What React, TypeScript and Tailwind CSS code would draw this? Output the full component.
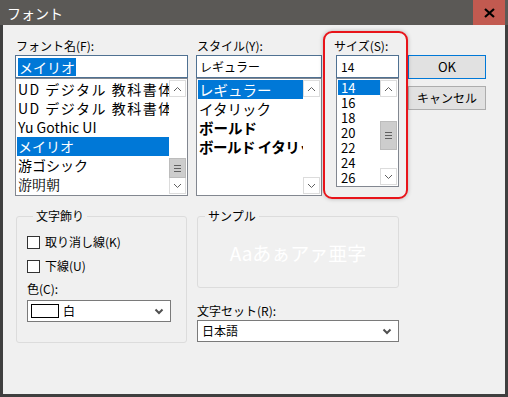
import React from "react";

const jp = "font-['Noto_Sans_CJK_JP','Noto_Sans',sans-serif]";

function Chevron({ up = false }: { up?: boolean }) {
  return (
    <svg width="9" height="6" viewBox="0 0 9 6">
      <polyline
        points={up ? "1,5 4.5,1.5 8,5" : "1,1 4.5,4.5 8,1"}
        fill="none"
        stroke="#606060"
        strokeWidth="1"
      />
    </svg>
  );
}

function ScrollBar({ thumbTop, thumbH, disabled = false }: { thumbTop: number; thumbH: number; disabled?: boolean }) {
  return (
    <div className="relative shrink-0 w-[17px] h-full bg-white flex flex-col">
      <div className="h-[17px] border border-[#dcdcdc] bg-white flex items-center justify-center">
        <Chevron up />
      </div>
      <div className="flex-1 bg-white" />
      <div className="h-[17px] border border-[#dcdcdc] bg-white flex items-center justify-center">
        <Chevron />
      </div>
      {!disabled && (
        <div
          className="absolute left-0 w-[17px] bg-[#cdcdcd] border border-[#bcbcbc] flex flex-col items-center justify-center gap-[2px]"
          style={{ top: thumbTop, height: thumbH }}
        >
          <div className="w-[7px] h-px bg-[#606060]" />
          <div className="w-[7px] h-px bg-[#606060]" />
          <div className="w-[7px] h-px bg-[#606060]" />
        </div>
      )}
    </div>
  );
}

function Dropdown() {
  return (
    <svg width="10" height="7" viewBox="0 0 10 7">
      <polyline points="1.5,1.5 5,5 8.5,1.5" fill="none" stroke="#505050" strokeWidth="2" />
    </svg>
  );
}

export default function App() {
  const fonts = [
    { name: "UD デジタル 教科書体 NK-R", cls: "tracking-[1.5px]" },
    { name: "UD デジタル 教科書体 NP-R", cls: "tracking-[1.5px]" },
    { name: "Yu Gothic UI", cls: "" },
    { name: "メイリオ", cls: "", sel: true },
    { name: "游ゴシック", cls: "" },
    { name: "游明朝", cls: "font-['Noto_Serif_CJK_JP','Noto_Sans_CJK_JP',serif]" },
  ];
  const styles = [
    { name: "レギュラー", cls: "", sel: true },
    { name: "イタリック", cls: "" },
    { name: "ボールド", cls: "font-bold" },
    { name: "ボールド イタリック", cls: "font-bold tracking-[-0.5px]" },
  ];
  const sizes = ["14", "16", "18", "20", "22", "24", "26"];

  return (
    <div className={`w-[508px] h-[397px] bg-[#3f3f3f] flex flex-col ${jp} text-[12px] text-black`}>
      {/* title bar */}
      <div className="h-[25px] bg-[#5b5956] flex items-center justify-between">
        <span className="pl-[7px] text-white text-[14px] leading-none">フォント</span>
        <div className="w-[32px] h-[25px] mr-[3px] bg-[#c25a50] flex items-center justify-center">
          <svg width="11" height="10" viewBox="0 0 11 10">
            <path d="M1 1 L10 9 M10 1 L1 9" stroke="#000" strokeWidth="2.2" />
          </svg>
        </div>
      </div>

      {/* client area */}
      <div className="relative mx-[3px] mb-[3px] flex-1 bg-[#f0f0f0]">
        {/* highlight annotation */}
        <div className="absolute left-[320px] top-[6px] w-[85px] h-[168px] rounded-[9px] border-2 border-[#e8141a] shadow-[0_0_4px_rgba(0,0,0,0.25)]" />

        <div className="flex pt-[14px] pl-[12px]">
          {/* font name */}
          <div className="w-[173px] flex flex-col">
            <div className="h-[16px] leading-[14px] pl-px">フォント名(F):</div>
            <div className="h-[23px] border border-[#4f7192] bg-white flex items-center pl-[2px]">
              <span className="bg-[#0078d7] text-white text-[14px] leading-[18px] px-px">メイリオ</span>
            </div>
            <div className="h-[118px] border border-[#828790] bg-white flex p-px">
              <div className="flex-1 min-w-0 overflow-hidden">
                {fonts.map((f) => (
                  <div
                    key={f.name}
                    className={`h-[19px] leading-[19px] text-[14px] whitespace-nowrap pl-px ${f.cls} ${f.sel ? "bg-[#0078d7] text-white" : ""}`}
                  >
                    {f.name}
                  </div>
                ))}
              </div>
              <ScrollBar thumbTop={78} thumbH={20} />
            </div>
          </div>

          {/* style */}
          <div className="w-[126px] ml-[8px] flex flex-col">
            <div className="h-[16px] leading-[14px] pl-px">スタイル(Y):</div>
            <div className="h-[23px] border border-[#4f7192] bg-white flex items-center pl-[3px]">
              レギュラー
            </div>
            <div className="h-[118px] border border-[#828790] bg-white flex p-px">
              <div className="flex-1 min-w-0 overflow-hidden">
                {styles.map((s) => (
                  <div
                    key={s.name}
                    className={`h-[19px] leading-[19px] text-[14.5px] whitespace-nowrap pl-px ${s.cls} ${s.sel ? "w-[106px] bg-[#0078d7] text-white" : ""}`}
                  >
                    {s.name}
                  </div>
                ))}
              </div>
              <ScrollBar thumbTop={0} thumbH={0} disabled />
            </div>
          </div>

          {/* size */}
          <div className="w-[63px] ml-[14px] flex flex-col">
            <div className="h-[16px] leading-[14px] -ml-[2px]">サイズ(S):</div>
            <div className="h-[23px] border border-[#4f7192] bg-white flex items-center pl-[4px]">
              14
            </div>
            <div className="h-[109px] border border-[#828790] bg-white flex p-px">
              <div className="flex-1 min-w-0 overflow-hidden">
                {sizes.map((s, i) => (
                  <div
                    key={s}
                    className={`h-[15px] leading-[15px] text-[13px] pl-[3px] ${i === 0 ? "bg-[#0078d7] text-white" : ""}`}
                  >
                    {s}
                  </div>
                ))}
              </div>
              <ScrollBar thumbTop={41} thumbH={29} />
            </div>
          </div>

          {/* buttons */}
          <div className="w-[78px] ml-[9px] pt-[16px] flex flex-col gap-[7px]">
            <button className="h-[24px] border border-[#0078d7] bg-[#e1e1e1] text-[13px]">OK</button>
            <button className="h-[24px] border border-[#adadad] bg-[#e1e1e1] text-[12px]">キャンセル</button>
          </div>
        </div>

        {/* lower area */}
        <div className="flex pl-[13px] mt-[13px]">
          <fieldset className="w-[171px] h-[134px] border border-[#dcdcdc] rounded-[3px] pl-[10px]">
            <legend className="ml-[6px] px-[3px] text-[12px] leading-[14px]">文字飾り</legend>
            <div className="flex items-center mt-[10px] gap-[5px]">
              <div className="w-[13px] h-[13px] border border-[#333] bg-white" />
              <span>取り消し線(K)</span>
            </div>
            <div className="flex items-center mt-[6px] gap-[5px]">
              <div className="w-[13px] h-[13px] border border-[#333] bg-white" />
              <span>下線(U)</span>
            </div>
            <div className="mt-[7px] leading-[14px]">色(C):</div>
            <div className="mt-[4px] w-[144px] h-[22px] border border-[#7a7a7a] bg-white flex items-center pl-[3px] pr-[6px]">
              <div className="w-[28px] h-[14px] border border-black bg-white" />
              <span className="ml-[4px] flex-1">白</span>
              <Dropdown />
            </div>
          </fieldset>

          <div className="w-[202px] ml-[10px] flex flex-col">
            <fieldset className="h-[79px] border border-[#dcdcdc] rounded-[3px]">
              <legend className="ml-[7px] px-[3px] text-[12px] leading-[14px]">サンプル</legend>
              <div className="pt-[19px] text-center text-white text-[19px] leading-[22px]">Aaあぁアァ亜字</div>
            </fieldset>
            <div className="mt-[16px] h-[16px] leading-[14px]">文字セット(R):</div>
            <div className="h-[22px] border border-[#7a7a7a] bg-white flex items-center pl-[4px] pr-[6px]">
              <span className="flex-1">日本語</span>
              <Dropdown />
            </div>
          </div>
        </div>
      </div>
    </div>
  );
}
